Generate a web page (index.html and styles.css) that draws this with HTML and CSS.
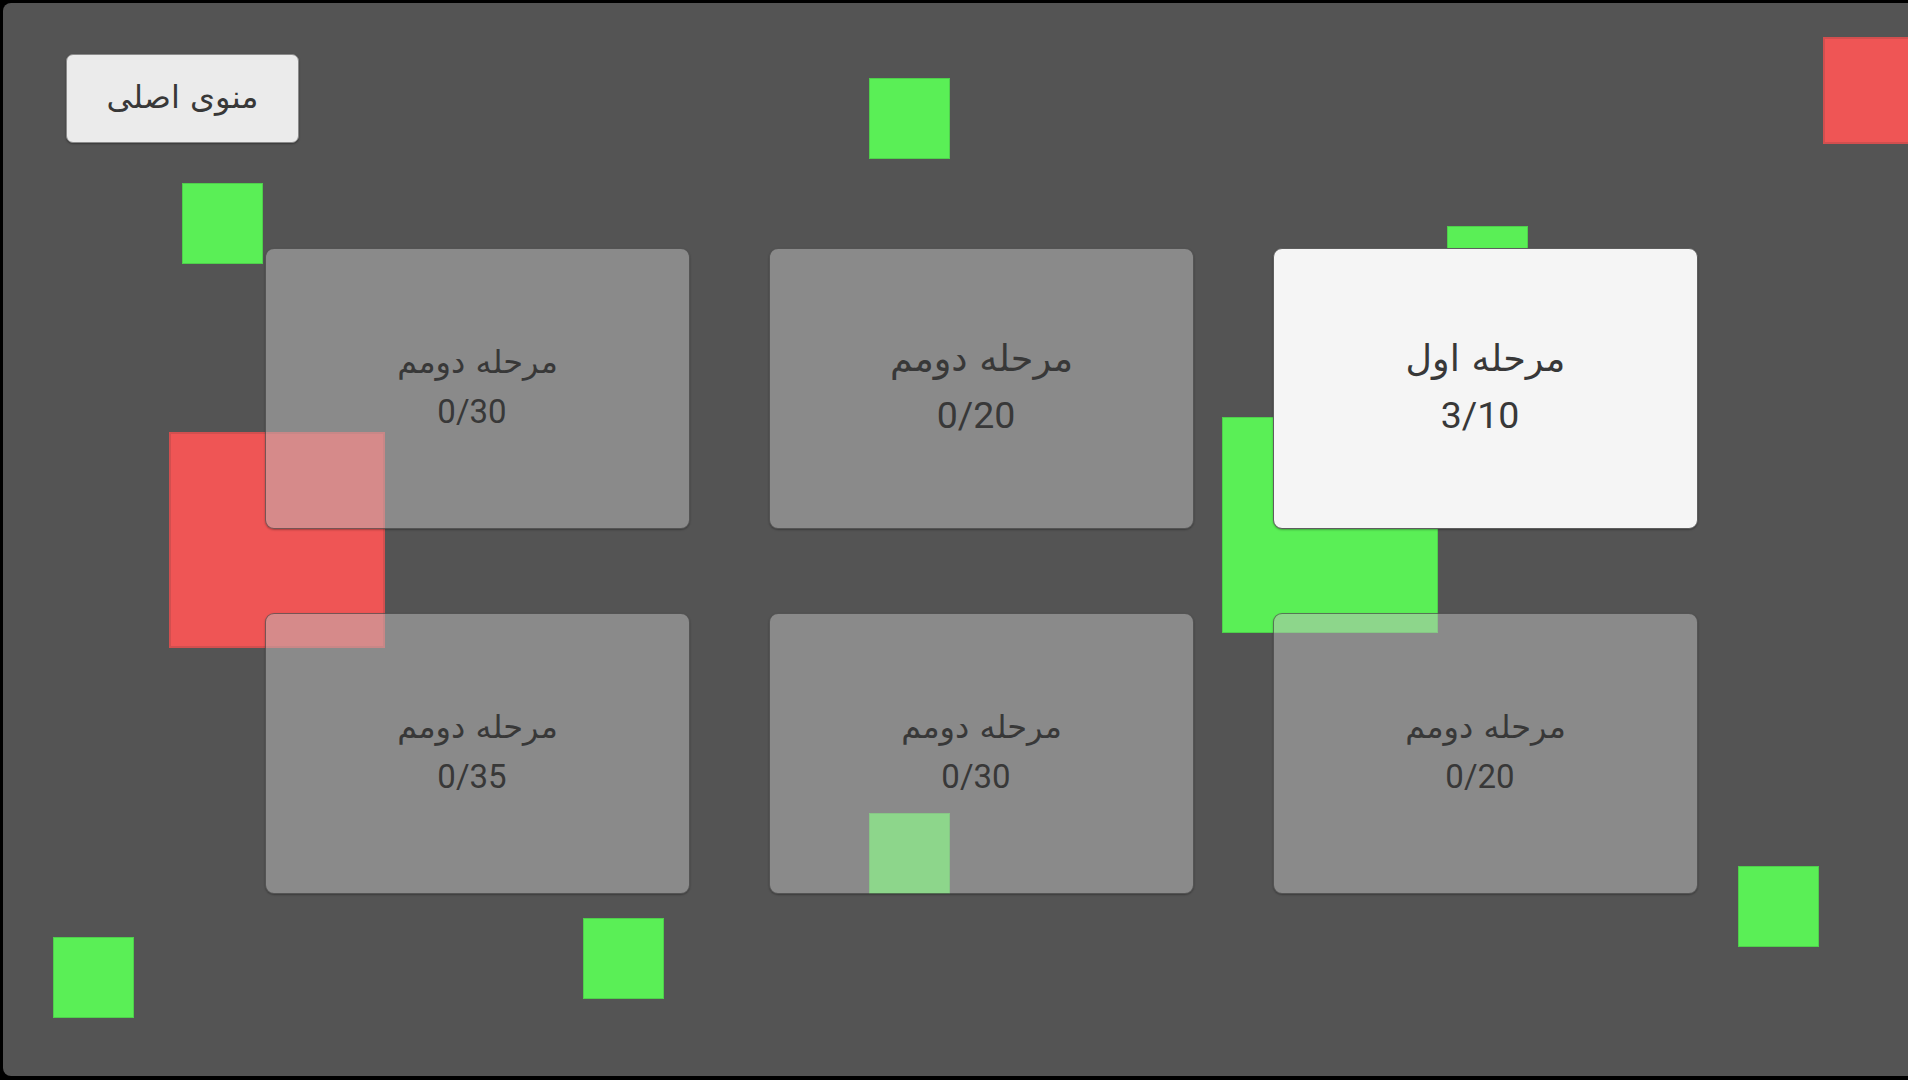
FILE: index.html
```html
<!DOCTYPE html>
<html lang="fa">
<head>
<meta charset="UTF-8">
<meta name="viewport" content="width=device-width, initial-scale=1.0">
<title>Levels</title>
<link rel="stylesheet" href="styles.css">
</head>
<body>
<div class="screen">
    <!-- falling blocks behind the level cards -->
    <div class="block green" style="left:179px; top:180px;"></div>
    <div class="block green" style="left:866px; top:75px;"></div>
    <div class="block green" style="left:1444px; top:223px;"></div>
    <div class="block red" style="left:1820px; top:34px; width:107px; height:107px;"></div>
    <div class="block red" style="left:166px; top:429px; width:216px; height:216px;"></div>
    <div class="block green" style="left:1219px; top:414px; width:216px; height:216px;"></div>
    <div class="block green" style="left:866px; top:810px;"></div>
    <div class="block green" style="left:1735px; top:863px;"></div>
    <div class="block green" style="left:50px; top:934px;"></div>
    <div class="block green" style="left:580px; top:915px;"></div>

    <button class="menu-btn">منوی اصلی</button>

    <div class="levels">
        <div class="level">
            <span class="level-name">مرحله دومم</span>
            <span class="level-score">0/30</span>
        </div>
        <div class="level big">
            <span class="level-name">مرحله دومم</span>
            <span class="level-score">0/20</span>
        </div>
        <div class="level big open">
            <span class="level-name">مرحله اول</span>
            <span class="level-score">3/10</span>
        </div>
        <div class="level">
            <span class="level-name">مرحله دومم</span>
            <span class="level-score">0/35</span>
        </div>
        <div class="level">
            <span class="level-name">مرحله دومم</span>
            <span class="level-score">0/30</span>
        </div>
        <div class="level">
            <span class="level-name">مرحله دومم</span>
            <span class="level-score">0/20</span>
        </div>
    </div>
</div>
</body>
</html>
```

FILE: styles.css
```css
html, body {
    margin: 0;
    padding: 0;
    background-color: #000;
    overflow: hidden;
}
body {
    font-family: Roboto, "DejaVu Sans", sans-serif;
    color: #383838;
}
.screen {
    position: relative;
    margin: 3px 0 0 3px;
    width: 1920px;
    height: 1073px;
    background-color: #545454;
    border-radius: 8px 0 0 8px;
    overflow: hidden;
    padding: 51px 0 0 63px;
    box-sizing: border-box;
    display: flex;
    flex-direction: column;
    align-items: flex-start;
}
.block {
    position: absolute;
    width: 81px;
    height: 81px;
    box-sizing: border-box;
    z-index: 0;
}
.green {
    background-color: #5aef56;
    border: 1px solid #4fcf4c;
}
.red {
    background-color: #ef5555;
    border: 2px solid #d24f4f;
}
.menu-btn {
    position: relative;
    z-index: 1;
    width: 233px;
    height: 89px;
    background-color: #ebebeb;
    border: 1px solid #8a8a8a;
    border-radius: 7px;
    box-shadow: 0 1px 2px rgba(0,0,0,0.35);
    font-family: "DejaVu Sans", sans-serif;
    font-size: 32px;
    color: #383838;
    padding: 0 0 4px;
    cursor: pointer;
}
.levels {
    position: relative;
    z-index: 1;
    margin: 105px 0 0 199px;
    display: grid;
    grid-template-columns: repeat(3, 425px);
    grid-auto-rows: 281px;
    column-gap: 79px;
    row-gap: 84px;
}
.level {
    display: flex;
    flex-direction: column;
    align-items: center;
    justify-content: center;
    background-color: rgba(190,190,190,0.51);
    border: 1px solid rgba(40,40,40,0.55);
    border-radius: 9px;
    box-shadow: 0 1px 2px rgba(0,0,0,0.3);
    box-sizing: border-box;
    padding-bottom: 4px;
}
.level.open {
    background-color: #f5f5f5;
    border-color: #5e5e5e;
}
.level-name {
    font-family: "DejaVu Sans", sans-serif;
    font-size: 32px;
    line-height: 49px;
    direction: rtl;
}
.level-score {
    font-size: 33px;
    line-height: 49px;
    padding-right: 11px;
}
.big .level-name {
    font-size: 36.5px;
    line-height: 57px;
}
.big .level-score {
    font-size: 37.5px;
    line-height: 57px;
}
```
